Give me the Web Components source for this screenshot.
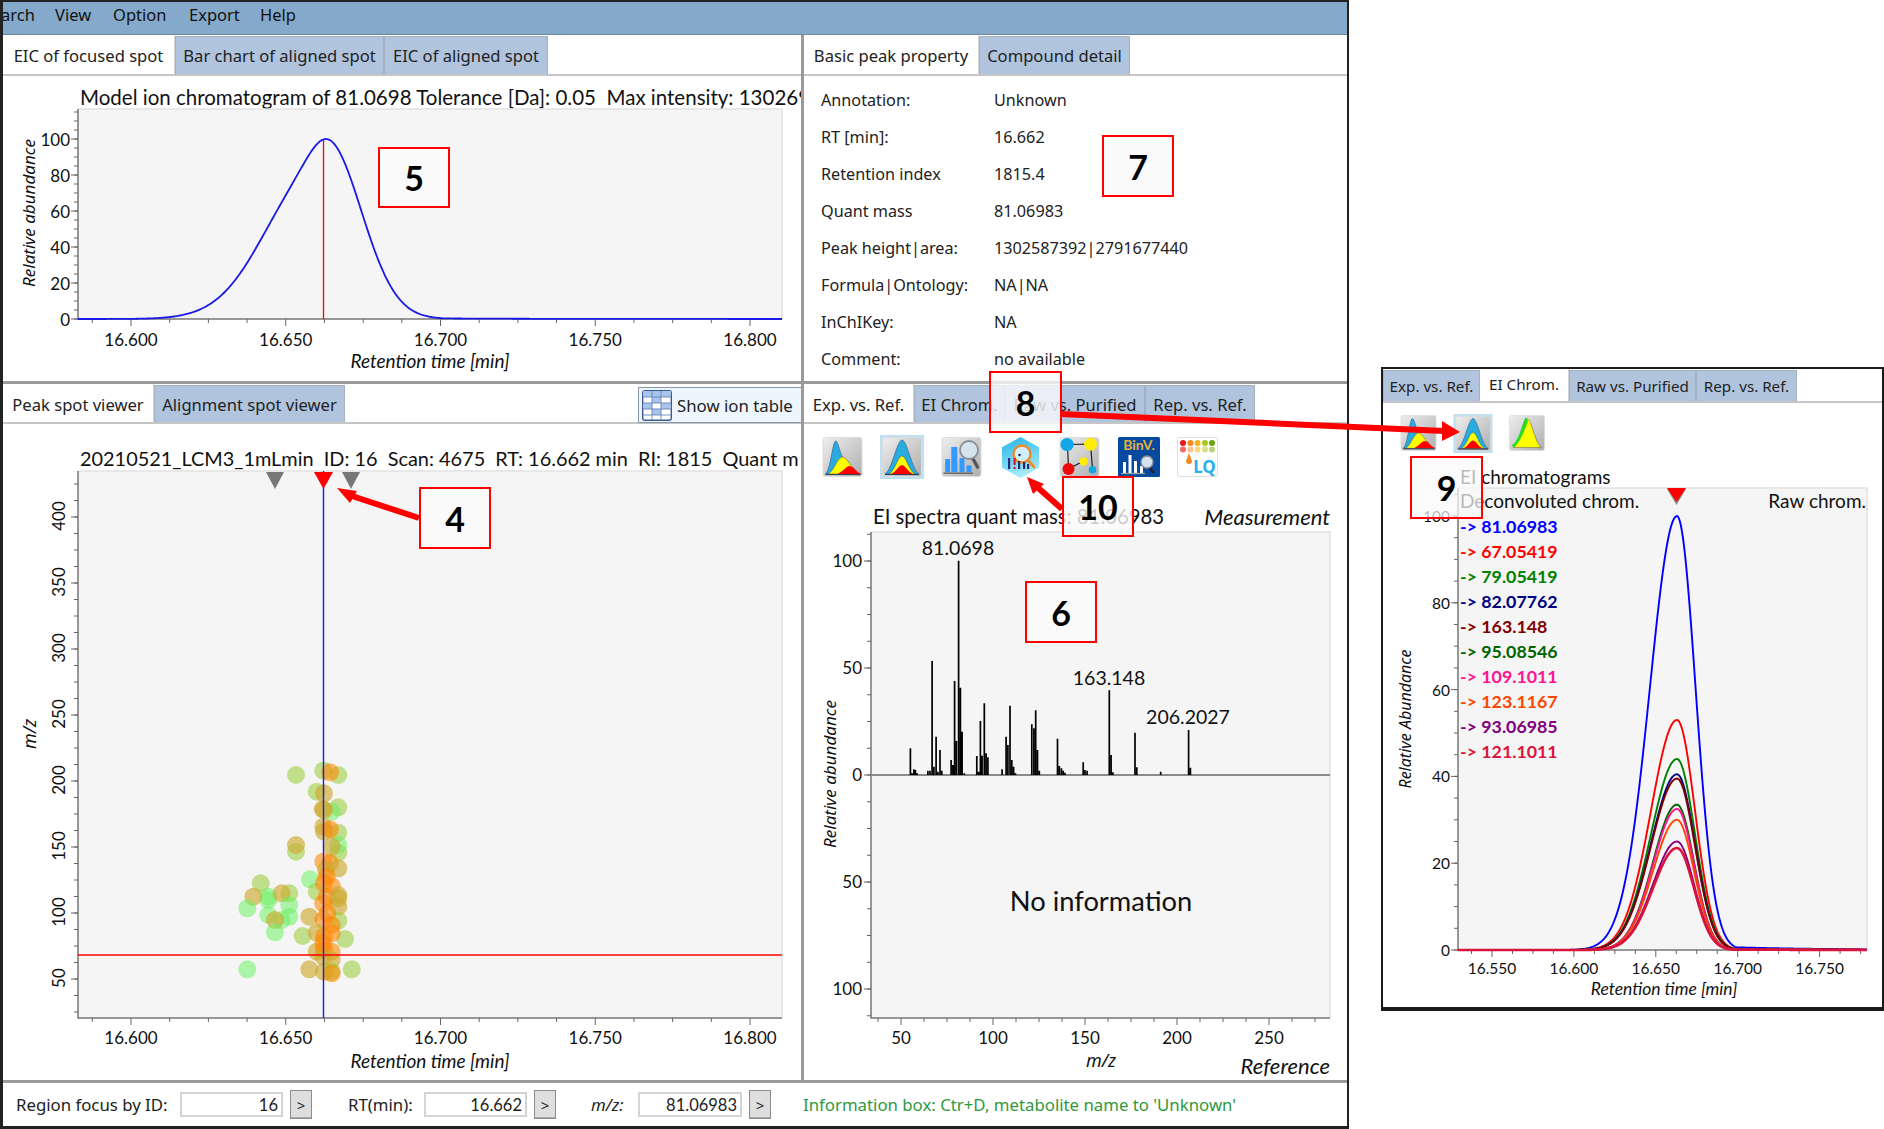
<!DOCTYPE html>
<html><head><meta charset="utf-8"><title>MS-DIAL</title>
<style>html,body{margin:0;padding:0;background:#fff;overflow:hidden}</style></head>
<body>
<ms-app>
  <ms-window>
    <ms-menu slot="menu"></ms-menu>
    <ms-panel slot="a" tabs="EIC of focused spot:172*|Bar chart of aligned spot:209|EIC of aligned spot:164">
      <ms-eic></ms-eic>
    </ms-panel>
    <ms-panel slot="b" tabs="Basic peak property:175*|Compound detail:151">
      <ms-props></ms-props>
    </ms-panel>
    <ms-panel slot="c" tabs="Peak spot viewer:151*|Alignment spot viewer:191" tall>
      <ms-ion-button slot="tools"></ms-ion-button>
      <ms-scatter></ms-scatter>
    </ms-panel>
    <ms-panel slot="d" tabs="Exp. vs. Ref.:110*|EI Chrom.:91|Raw vs. Purified:140|Rep. vs. Ref.:110" tall>
      <ms-iconrow icons="bell1:41:17|bell2:44:17|bars:41:20|hex:37:20|net:41:18|binv:42:17|lq:41:0" start="18" rowh="56" pt="10"></ms-iconrow>
      <ms-spectrum></ms-spectrum>
    </ms-panel>
    <ms-status slot="status"></ms-status>
  </ms-window>
  <ms-float></ms-float>
  <ms-overlay></ms-overlay>
  <ms-callout n="5" x="378" y="147" w="72" h="61"></ms-callout>
  <ms-callout n="7" x="1102" y="135" w="72" h="62"></ms-callout>
  <ms-callout n="4" x="419" y="487" w="72" h="62"></ms-callout>
  <ms-callout n="8" x="989" y="371" w="73" h="62" a=".8"></ms-callout>
  <ms-callout n="10" x="1062" y="476" w="72" h="61" a=".8"></ms-callout>
  <ms-callout n="6" x="1025" y="581" w="72" h="62"></ms-callout>
  <ms-callout n="9" x="1410" y="456" w="73" h="63" a=".72"></ms-callout>
</ms-app>
<script>
const UI = "'Noto Sans','Open Sans',sans-serif";
const PL = "Lato,'Noto Sans',sans-serif";

function def(name, html, init){
  customElements.define(name, class extends HTMLElement{
    constructor(){super();this.attachShadow({mode:'open'});}
    connectedCallback(){
      this.shadowRoot.innerHTML = typeof html==='function'?html(this):html;
      if(init) init(this);
    }
  });
}
/* ---------- chart helpers (all drawn in page coordinates through the viewBox) ---------- */
function T(x,y,s,o={}){
  y-=1;
  const a=o.anchor||'middle', fs=o.size||17, fam=o.fam||PL, fill=o.fill||'#111';
  const tr=o.rot?` transform="rotate(${o.rot} ${x} ${y})"`:'';
  return `<text x="${x}" y="${y}" text-anchor="${a}" dominant-baseline="central" font-family="${fam}" font-size="${fs}" fill="${fill}" style="white-space:pre"${o.italic?' font-style="italic"':''}${o.bold?' font-weight="700"':''}${tr}>${s}</text>`;
}
function frame(x0,x1,y0,y1){
  return `<rect x="${x0}" y="${y0}" width="${x1-x0}" height="${y1-y0}" fill="#f5f5f5"/>
  <path d="M${x0} ${y0}H${x1}V${y1}" fill="none" stroke="#e2e2e2" stroke-width="1.5"/>
  <path d="M${x0} ${y0}V${y1}H${x1}" fill="none" stroke="#777" stroke-width="1.5"/>`;
}
function xAxis(y1,x0,x1,start,step,n,lab,ly,fs){
  let p='',t='';
  for(let i=-8;i<60;i++){
    const x=start+step*i/4; if(x<x0+2||x>x1) continue;
    p+=`M${x} ${y1}v${i%4===0?7:4}`;
  }
  for(let i=0;i<n;i++) t+=T(start+step*i,ly,lab(i),{size:fs});
  return `<path d="${p}" stroke="#666" stroke-width="1"/>`+t;
}
function yTicks(x0,ys,y0,y1){
  let p='';
  for(const y of ys.minor){ if(y>=y0&&y<=y1+.5) p+=`M${x0} ${y}h-4`; }
  for(const y of ys.major){ p+=`M${x0} ${y}h-7`; }
  return `<path d="${p}" stroke="#666" stroke-width="1"/>`;
}
function range(a,b,s){const r=[];for(let v=a;v<=b;v+=s)r.push(v);return r;}
function peak(px,base,h,sL,sR,x0,x1,tail,grow){
  let d='';
  for(let x=x0;x<=x1;x+=1){
    let s=x<px?sL:sR;
    if(grow&&x<px) s=sL+(grow-sL)*(1-Math.exp(-(((px-x)/40)**2)));
    let v=Math.exp(-((x-px)**2)/(2*s*s));
    if(tail&&x>px) v=Math.max(v,tail*Math.exp(-(x-px)/90));
    d+=(d?'L':'M')+x+' '+(base-h*v).toFixed(2);
  }
  return d;
}
function svg(x,y,w,h,body){
  return `<style>:host{display:block;flex:1;min-height:0}svg{display:block}</style>
  <svg xmlns="http://www.w3.org/2000/svg" width="${w}" height="${h}" viewBox="${x} ${y} ${w} ${h}" style="overflow:hidden">${body}</svg>`;
}
/* ---------- icons ---------- */
const BG=`<defs><linearGradient id="g" x1="0" y1="0" x2="1" y2="1"><stop offset="0" stop-color="#eeeeee"/><stop offset="1" stop-color="#aeaeae"/></linearGradient></defs><rect x=".5" y=".5" width="39" height="39" rx="2.5" fill="url(#g)" stroke="#dcdcdc"/>`;
const ICONS={
 bell1:`<svg viewBox="0 0 40 40">${BG}<path d="M3 37C8 33 10 5 13 4C16 3 18 22 24 26L26 37Z" fill="#29abe2" stroke="#27476b" stroke-width=".5"/><path d="M6 37C12 33 15 20 20 20C24 20 26 27 33 33L35 37Z" fill="#ffff00" stroke="#333" stroke-width=".4"/><path d="M15 37C21 34 24 29 27 29C31 29 33 35 39 37Z" fill="#ff0000"/><path d="M3 37.5H38" stroke="#31415c" stroke-width="1.2"/></svg>`,
 bell2:`<svg viewBox="-2 -2 44 44"><rect x="-2" y="-2" width="44" height="44" fill="#bfe0f2"/>${BG}<path d="M3 37C10 33 15 3 20 3C25 3 30 33 37 37Z" fill="#29abe2" stroke="#27476b" stroke-width=".5"/><path d="M7 37C13 34 16 19 20 19C24 19 27 34 33 37Z" fill="#ffff00" stroke="#333" stroke-width=".4"/><path d="M9 37C14 35 17 28 20 28C23 28 26 35 31 37Z" fill="#ff0000"/><path d="M3 37.5H37" stroke="#31415c" stroke-width="1.2"/></svg>`,
 bell3:`<svg viewBox="0 0 40 40">${BG}<path d="M5 36C12 32 15 4 20 4C25 4 29 32 36 36Z" fill="#ffff00" stroke="#444" stroke-width=".5"/><path d="M3 34C10 30 14 14 18 3C20 3 21 5 21 7C18 15 13 30 5 36Z" fill="#22dd22"/></svg>`,
 bars:`<svg viewBox="0 0 40 40">${BG}<rect x="3.6" y="22" width="5" height="13" fill="#3399ff"/><rect x="9.8" y="10" width="6" height="25" fill="#3399ff"/><rect x="18" y="21" width="5" height="14" fill="#3399ff"/><rect x="25" y="28.5" width="5" height="6.5" fill="#3399ff"/><path d="M2 36.2H31.5" stroke="#666" stroke-width="1.5"/><path d="M31 21L36 30" stroke="#555" stroke-width="3.4" stroke-linecap="round"/><circle cx="27.5" cy="13" r="9" fill="#d6e4f0" stroke="#8a8f96" stroke-width="1.8"/></svg>`,
 hex:`<svg viewBox="0 0 37 41"><defs><linearGradient id="h" x1="0" y1="0" x2=".3" y2="1"><stop offset="0" stop-color="#22b4e6"/><stop offset="1" stop-color="#a5ecfa"/></linearGradient></defs><path d="M18.5 0L37 10.2V30.8L18.5 41L0 30.8V10.2Z" fill="url(#h)"/><circle cx="20" cy="17" r="8.5" fill="#cfeffa" stroke="#f08a24" stroke-width="2.4"/><path d="M26 23L32 30" stroke="#f08a24" stroke-width="2.8" stroke-linecap="round"/><rect x="6" y="21" width="2.2" height="11" fill="#262a78"/><rect x="11.5" y="21" width="2.2" height="7" fill="#d8192c"/><circle cx="12.6" cy="31" r="1.2" fill="#d8192c"/><rect x="16" y="24" width="2.2" height="8" fill="#262a78"/><circle cx="17.5" cy="18" r="1.3" fill="#262a78"/><rect x="21" y="25" width="2.2" height="7" fill="#262a78"/><rect x="25" y="27" width="2.2" height="5" fill="#262a78"/></svg>`,
 net:`<svg viewBox="0 0 40 40">${BG}<path d="M8 7.5L31 7M8 8L9 32M31 7L33 32.5M9 32L24 24" stroke="#111" stroke-width="1.1" fill="none"/><circle cx="7.6" cy="7.5" r="6.6" fill="#11a6e8"/><circle cx="31" cy="7.2" r="6.4" fill="#ffee00"/><circle cx="24" cy="24.5" r="4.2" fill="#ffee00"/><circle cx="9" cy="32" r="6" fill="#ee0a0a"/><circle cx="33" cy="32.7" r="3.8" fill="#11a6e8"/></svg>`,
 binv:`<svg viewBox="0 0 42 40"><rect width="42" height="40" rx="1.5" fill="#07499f"/><text x="21" y="13" text-anchor="middle" font-family="${PL}" font-weight="700" font-size="14" fill="#e3b33c">BinV.</text><rect x="5" y="25" width="3" height="11" fill="#fff"/><rect x="10.5" y="18" width="3" height="18" fill="#fff"/><rect x="16" y="24" width="3" height="12" fill="#fff"/><rect x="22" y="29" width="3" height="7" fill="#fff"/><path d="M3 36.5H27" stroke="#9aa" stroke-width="1.2"/><path d="M31 30L36 36" stroke="#223" stroke-width="2.6"/><circle cx="29" cy="25" r="6" fill="#d6e4f0" stroke="#8a8f96" stroke-width="1.4"/></svg>`,
 lq:`<svg viewBox="0 0 41 40"><rect x=".5" y=".5" width="40" height="39" rx="2" fill="#fff" stroke="#dedede"/>
  <g><circle cx="6" cy="6" r="3" fill="#e8141c"/><circle cx="13.4" cy="6" r="3" fill="#f58a1e"/><circle cx="20.6" cy="6" r="3" fill="#f5b21e"/><circle cx="28" cy="6" r="3" fill="#a8c81e"/><circle cx="35" cy="6" r="3" fill="#6ca512"/>
  <circle cx="6" cy="12.5" r="3" fill="#f06a60"/><circle cx="13.4" cy="12.5" r="3" fill="#f9c090"/><circle cx="20.6" cy="12.5" r="3" fill="#f8d67c"/><circle cx="28" cy="12.5" r="3" fill="#d4e088"/><circle cx="35" cy="12.5" r="3" fill="#b8d478"/></g>
  <path d="M12 16L15 24A3 3 0 1 1 9 24Z" fill="#f58a1e"/><text x="27.5" y="36" text-anchor="middle" font-family="${UI}" font-weight="700" font-size="17" fill="#2ab0ee">LQ</text></svg>`
};
def('ms-icon',el=>{
  const k=el.getAttribute('k');
  return `<style>:host{display:block;flex:none}svg{display:block;width:100%;height:100%}</style>${ICONS[k]}`;
});
def('ms-iconrow',el=>{
  const items=el.getAttribute('icons').split('|').map(s=>s.split(':'));
  const h=k=>k==='bell2'?44:(k==='hex'?41:40);
  return `<style>:host{display:flex;align-items:center;flex:none;height:${el.getAttribute('rowh')}px;padding-left:${el.getAttribute('start')}px;padding-top:${el.getAttribute('pt')||0}px;box-sizing:border-box}</style>`+
  items.map(([k,w,g])=>`<ms-icon k="${k}" style="width:${w}px;height:${el.hasAttribute('small')?(k==='bell2'?39:36):h(k)}px;margin-right:${g}px"></ms-icon>`).join('');
});
/* ---------- shell ---------- */
def('ms-tab',el=>`<style>
:host{display:flex;align-items:center;justify-content:center;box-sizing:border-box;white-space:nowrap;font:var(--tabfs,16.6px) ${UI};color:#222;flex:none;
 background:#b0c4de;border:1px solid #a5b0bf;border-bottom:0;height:calc(var(--h) - 3px)}
:host([active]){background:#fff;border:0;height:var(--h);padding-top:var(--ap,4px);border-right:1px solid #d4d4d4}
</style><slot></slot>`);
def('ms-tabbar',el=>{
  const tabs=el.getAttribute('tabs').split('|').map(s=>s.split(':'));
  return `<style>:host{display:flex;align-items:flex-end;flex:none;box-sizing:border-box;height:var(--h);border-bottom:2px solid #c6c6c6;position:relative}
  .sp{flex:1}</style>`+tabs.map(([t,w])=>`<ms-tab ${w.endsWith('*')?'active':''} style="width:${parseInt(w)}px">${t}</ms-tab>`).join('')+`<div class="sp"></div><slot></slot>`;
});
def('ms-panel',el=>`<style>:host{display:flex;flex-direction:column;background:#fff;min-width:0;min-height:0;overflow:hidden;--h:${el.hasAttribute('tall')?40:41}px}</style>
<ms-tabbar tabs="${el.getAttribute('tabs')}"><slot name="tools"></slot></ms-tabbar><slot></slot>`);
def('ms-window',`<style>
:host{display:grid;flex:none;box-sizing:border-box;width:1349px;height:1129px;border:solid #222;border-width:2px 2px 3px 3px;background:#9a9a9a;
 grid-template-columns:798px 3px 1fr;grid-template-rows:33px 346px 3px 696px 3px 43px}
.m{grid-column:1/4;grid-row:1}.a{grid-column:1;grid-row:2}.b{grid-column:3;grid-row:2}.c{grid-column:1;grid-row:4}.d{grid-column:3;grid-row:4}.s{grid-column:1/4;grid-row:6}
.g{display:grid;min-width:0;min-height:0}
</style>
<div class="g m"><slot name="menu"></slot></div><div class="g a"><slot name="a"></slot></div><div class="g b"><slot name="b"></slot></div>
<div class="g c"><slot name="c"></slot></div><div class="g d"><slot name="d"></slot></div><div class="g s"><slot name="status"></slot></div>`);
def('ms-menu',`<style>:host{display:flex;align-items:center;background:#84a9cb;border-bottom:1px solid #6d879f;font:16.5px ${UI};color:#111;overflow:hidden;padding-bottom:7px;box-sizing:border-box}
span{flex:none}.a{margin-left:-2px;width:54px}.b{width:58px}.c{width:76px}.d{width:71px}</style>
<span class="a">arch</span><span class="b">View</span><span class="c">Option</span><span class="d">Export</span><span>Help</span>`);
def('ms-ion-button',`<style>:host{display:flex;align-items:center;position:absolute;right:0;top:3px;width:163px;height:36px;box-sizing:border-box;background:#eef6fd;border:1px solid #8a97a6;border-right:0;font:16.8px ${UI};color:#222;padding-left:3px;gap:5px;white-space:nowrap}
svg{width:30px;height:31px;flex:none}</style>
<svg viewBox="0 0 30 31"><rect x=".7" y=".7" width="28.6" height="29.6" rx="2" fill="#fff" stroke="#3c5a96" stroke-width="1.4"/><g fill="#a8c4ea"><rect x="1" y="1" width="28" height="6"/><rect x="10" y="7" width="9" height="6"/><rect x="1" y="13" width="9" height="6"/><rect x="19" y="13" width="10" height="6"/><rect x="10" y="19" width="9" height="6"/></g><path d="M1 7H29M1 13H29M1 19H29M1 25H29M10 1V30M19 1V30" stroke="#6a85bb" stroke-width=".9"/></svg><span>Show ion table</span>`);
def('ms-props',el=>{
  const rows=[['Annotation:','Unknown'],['RT [min]:','16.662'],['Retention index','1815.4'],['Quant mass','81.06983'],['Peak height|area:','1302587392|2791677440'],['Formula|Ontology:','NA|NA'],['InChIKey:','NA'],['Comment:','no available']];
  return `<style>:host{display:grid;grid-template-columns:173px 1fr;grid-auto-rows:37px;padding:5px 0 0 17px;font:16.2px ${UI};color:#222;align-items:center}</style>`+
  rows.map(r=>`<div>${r[0]}</div><div>${r[1]}</div>`).join('');
});
def('ms-input',`<style>:host{display:flex;align-items:center;justify-content:flex-end;box-sizing:border-box;height:25px;border:2px solid #d4d4d4;background:#fff;padding-right:3px;font:16.5px ${PL};color:#222;flex:none}</style><slot></slot>`);
def('ms-gt',`<style>:host{display:flex;align-items:center;justify-content:center;box-sizing:border-box;width:22px;height:29px;border:1px solid #8c8c8c;background:#dedede;font:15px ${UI};color:#222;flex:none;box-shadow:inset 0 -1px #aaa}</style>&gt;`);
def('ms-status',`<style>:host{display:flex;align-items:center;background:#fff;font:16.8px ${UI};color:#222;padding-left:13px;box-sizing:border-box;white-space:nowrap;overflow:hidden}
.l{flex:none}.i{font-style:italic}.info{color:#2f9a3c;margin-left:32px}ms-input{margin-right:7px}</style>
<span class="l" style="width:164px">Region focus by ID:</span><ms-input style="width:103px">16</ms-input><ms-gt></ms-gt>
<span class="l" style="width:76px;margin-left:36px">RT(min):</span><ms-input style="width:103px">16.662</ms-input><ms-gt></ms-gt>
<span class="l i" style="width:47px;margin-left:35px">m/z:</span><ms-input style="width:104px">81.06983</ms-input><ms-gt></ms-gt>
<span class="info">Information box: Ctr+D, metabolite name to 'Unknown'</span>`);
/* ---------- charts ---------- */
const X0=78,X1=782;
def('ms-eic',()=>{
  const ymaj=range(0,5,1).map(i=>319-36*i), ymin=range(0,24,1).map(i=>319-9*i);
  let b=T(80,98,'Model ion chromatogram of 81.0698 Tolerance [Da]: 0.05  Max intensity: 130269',{anchor:'start',size:20.5})
  +frame(X0,X1,109,319)+yTicks(X0,{major:ymaj,minor:ymin},109,319);
  ['0','20','40','60','80','100'].forEach((s,i)=>b+=T(70,320-36*i,s,{anchor:'end'}));
  b+=xAxis(319,X0,X1,131,154.75,5,i=>(16.6+i*.05).toFixed(3),340,17);
  b+=T(28,214,'Relative abundance',{italic:true,size:17,rot:-90,fam:UI});
  b+=T(430,361,'Retention time [min]',{italic:true,size:19});
  b+=`<path d="M323.5 139V319" stroke="#f00" stroke-width="1.3"/>`;
  b+=`<path d="${peak(326,319,180,37,35,X0,X1,.012,52)}" fill="none" stroke="#1a1ae6" stroke-width="1.8"/>`;
  return svg(3,76,798,305,b);
});
const SPOTS=[[228,105,'y'],[310,92,'y'],[355,105,'y'],[330,97,'o'],[290,155,'y'],[312,160,'a'],[355,202,'y'],[335,215,'g'],[308,207,'a'],[312,210,'a'],[355,278,'y'],[310,260,'a'],[312,275,'a'],[330,268,'o'],[228,335,'y'],[228,315,'a'],[355,338,'y'],[355,315,'g'],[335,320,'a'],[310,365,'o'],[330,370,'o'],[355,385,'a'],[318,390,'a'],[270,418,'g'],[122,430,'y'],[290,455,'y'],[145,470,'g'],[145,480,'g'],[208,460,'y'],[185,460,'a'],[100,470,'a'],[312,430,'o'],[335,438,'o'],[320,470,'o'],[355,500,'a'],[355,475,'a'],[355,465,'a'],[310,490,'o'],[208,495,'g'],[82,505,'g'],[145,525,'g'],[208,530,'g'],[185,540,'g'],[165,540,'a'],[268,530,'a'],[355,542,'y'],[310,540,'o'],[335,555,'o'],[165,577,'g'],[248,588,'y'],[290,578,'a'],[375,597,'y'],[312,590,'o'],[335,580,'o'],[290,635,'a'],[312,630,'o'],[335,635,'o'],[310,650,'a'],[335,660,'a'],[268,688,'a'],[82,688,'g'],[312,695,'a'],[335,695,'y'],[395,688,'y'],[335,700,'o'],[310,610,'o'],[322,520,'o'],[320,410,'o']];
const SC={g:'rgba(110,240,100,.55)',y:'rgba(155,205,60,.58)',a:'rgba(205,170,50,.66)',o:'rgba(255,135,0,.58)'};
def('ms-scatter',()=>{
  const Y0=471,Y1=1018;
  let ymaj=[],ymin=[];
  for(let i=-2;i<9;i++){const y=979-66*i; ymaj.push(y);}
  for(let i=-4;i<36;i++){ymin.push(979-16.5*i);}
  ymaj=ymaj.filter(y=>y>Y0&&y<Y1);
  let b=T(80,459,'20210521_LCM3_1mLmin  ID: 16  Scan: 4675  RT: 16.662 min  RI: 1815  Quant m',{anchor:'start',size:19.9})
  +frame(X0,X1,Y0,Y1)+yTicks(X0,{major:ymaj,minor:ymin},Y0,Y1);
  [50,100,150,200,250,300,350,400].forEach((s,i)=>b+=T(58,979-66*i,s,{rot:-90}));
  b+=xAxis(Y1,X0,X1,131,154.75,5,i=>(16.6+i*.05).toFixed(3),1038,17);
  b+=T(29,735,'m/z',{italic:true,size:18,rot:-90,fam:UI});
  b+=T(430,1061,'Retention time [min]',{italic:true,size:19});
  for(const [x,y,c] of SPOTS) b+=`<circle cx="${(x/3+220).toFixed(1)}" cy="${(y/3+740).toFixed(1)}" r="9" fill="${SC[c]}"/>`;
  b+=`<path d="M${X0} 955H${X1}" stroke="#f00" stroke-width="1.5"/><path d="M323.5 471V1018" stroke="#1a1aee" stroke-width="1.4"/>`;
  b+=`<path d="M266 472H284L275 489Z" fill="#777"/><path d="M342 472H360L351 489Z" fill="#777"/><path d="M314 472H333L323.5 489Z" fill="#f00"/>`;
  return svg(3,424,798,656,b);
});
const BARS=[[309,685],[314,760],[319,748],[323,750],[328,760],[358,752],[364,752],[370,423],[375,740],[381,650],[386,755],[392,690],[397,752],[423,720],[428,735],[433,483],[438,663],[444,122],[449,503],[454,635],[460,760],[495,708],[500,755],[505,603],[510,707],[516,550],[521,700],[526,712],[566,748],[577,650],[582,675],[588,557],[593,720],[598,740],[603,760],[649,613],[655,625],[660,571],[665,690],[670,752],[721,656],[726,738],[732,745],[737,752],[742,758],[793,727],[798,750],[804,752],[866,511],[871,705],[876,757],[938,638],[943,742],[1010,755],[1088,630],[1093,743]];
def('ms-spectrum',()=>{
  const PX0=871,PX1=1330,Y0=532,Y1=1018;
  let ymaj=[561,668,775,882,989],ymin=[];
  for(let i=-9;i<=9;i++)ymin.push(775+i*26.75);
  let b=T(873,517,'EI spectra quant mass: 81.06983',{anchor:'start',size:20.3})+T(1330,517,'Measurement',{anchor:'end',italic:true,size:22})
  +frame(PX0,PX1,Y0,Y1)+yTicks(PX0,{major:ymaj,minor:ymin},Y0,Y1);
  [['100',561],['50',668],['0',775],['50',882],['100',989]].forEach(([s,y])=>b+=T(862,y+.5,s,{anchor:'end'}));
  let p='';
  for(let i=-1;i<=19;i++){const x=901+23*i; if(x>PX0&&x<PX1) p+=`M${x} ${Y1}v${i%4===0?7:4}`;}
  b+=`<path d="${p}" stroke="#666"/>`;
  ['50','100','150','200','250'].forEach((s,i)=>b+=T(901+92*i,1038,s));
  b+=T(1101,1061,'m/z',{italic:true,size:18,fam:UI});
  b+=T(1330,1066,'Reference',{anchor:'end',italic:true,size:22});
  b+=T(829,775,'Relative abundance',{italic:true,size:17,rot:-90,fam:UI});
  b+=`<path d="M${PX0} 775H${PX1}" stroke="#8a8a8a" stroke-width="2"/>`;
  let d='';for(const [sx,sy] of BARS){d+=`M${(800+sx/2.8).toFixed(1)} 775V${(520+sy/3).toFixed(1)}`;}
  b+=`<path d="${d}" stroke="#000" stroke-width="1.7" fill="none"/>`;
  b+=T(958,548,'81.0698',{size:19.5})+T(1109,678,'163.148',{size:19.5})+T(1188,717,'206.2027',{size:19.5});
  b+=T(1101,901,'No information',{size:27.3});
  return svg(804,480,542,600,b);
});
def('ms-float',()=>{
  const Y0=488,Y1=950,XA=1458,XB=1867;
  let ymin=range(0,21,1).map(i=>950-21.7*i);
  let ymaj=[0,1,2,3,4,5].map(i=>950-86.8*i);
  let b=T(1460,477,'EI chromatograms',{anchor:'start',size:19})+frame(XA,XB,Y0,Y1)+yTicks(XA,{major:ymaj,minor:ymin},Y0,Y1);
  b+=T(1460,501,'Deconvoluted chrom.',{anchor:'start',size:19})+T(1866,501,'Raw chrom.',{anchor:'end',size:19});
  ['0','20','40','60','80','100'].forEach((s,i)=>b+=T(1450,951-86.8*i,s,{anchor:'end',size:15.5}));
  b+=xAxis(950,XA,XB,1492,81.9,5,i=>(16.55+i*.05).toFixed(3),969,15.5);
  b+=T(1664,989,'Retention time [min]',{italic:true,size:17.5});
  b+=T(1405,720,'Relative Abundance',{italic:true,size:16,rot:-90,fam:UI});
  const leg=[['81.06983','#0000ff',100],['67.05419','#ff0000',53],['79.05419','#008000',44],['82.07762','#000080',40.5],['163.148','#800000',39.5],['95.08546','#006400',33.5],['109.1011','#ff1493',32.5],['123.1167','#ff4500',30],['93.06985','#800080',25],['121.1011','#dc143c',23.5]];
  leg.forEach(([s,c,h],i)=>{
    const sL=h>90?27:(h>35?26:24), sR=h>90?18.5:(h>35?18:17);
    b+=`<path d="${peak(1677,950,h*4.34,sL,sR,XA,XB,h>90?.012:.006)}" fill="none" stroke="${c}" stroke-width="${i===9?2.6:1.9}"/>`;
    b+=T(1460,527+25*i,'-&gt; '+s,{anchor:'start',size:17.8,bold:true,fill:c});
  });
  b+=`<path d="M1667 489H1686L1676.5 505Z" fill="#888"/><path d="M1667 488H1686L1676.5 502Z" fill="#f00"/>`;
  return `<style>:host{display:flex;flex-direction:column;flex:none;box-sizing:border-box;width:503px;height:644px;margin:367px 0 0 32px;border:solid #1a1a1a;border-width:2px 2px 4px 2px;background:#fff;--h:34px;--tabfs:15.2px;--ap:0px;overflow:hidden}svg{display:block}</style>
  <ms-tabbar tabs="Exp. vs. Ref.:97|EI Chrom.:89*|Raw vs. Purified:127|Rep. vs. Ref.:101"></ms-tabbar>
  <ms-iconrow small icons="bell1:39:15|bell2:40:15|bell3:38:0" start="16" rowh="52" pt="8"></ms-iconrow>
  <svg xmlns="http://www.w3.org/2000/svg" width="499" height="552" viewBox="1383 455 499 552">${b}</svg>`;
});
/* ---------- overlays ---------- */
def('ms-callout',el=>{
  const g=k=>el.getAttribute(k);
  return `<style>:host{position:absolute;left:${g('x')}px;top:${g('y')}px;width:${g('w')}px;height:${g('h')}px;box-sizing:border-box;border:2.5px solid #f00;background:rgba(250,250,250,${g('a')||1});display:flex;align-items:center;justify-content:center;font:700 34px Lato,sans-serif;color:#000}</style>${g('n')}`;
});
def('ms-overlay',()=>{
  const arrow=(pts,ln)=>`<path d="${ln}" stroke="#f00" stroke-width="6" fill="none"/><polygon points="${pts}" fill="#f00"/>`;
  return `<style>:host{position:absolute;left:0;top:0;width:1884px;height:1129px;z-index:2;pointer-events:none}svg{display:block}</style>
  <svg width="1884" height="1129" viewBox="0 0 1884 1129">
  ${arrow('337,488 357,491 350,503','M352 496L419 518')}
  ${arrow('1027,477 1044,484 1033,494','M1036 486L1062 509')}
  ${arrow('1460,432 1442,421 1442,441','M1061 414L1444 431')}
  </svg>`;
});
def('ms-app',`<style>:host{display:flex;position:relative;width:1884px;height:1129px;align-items:flex-start;overflow:hidden;background:#fff}
::slotted(ms-callout){z-index:3}</style><slot></slot>`);
</script>
</body></html>
